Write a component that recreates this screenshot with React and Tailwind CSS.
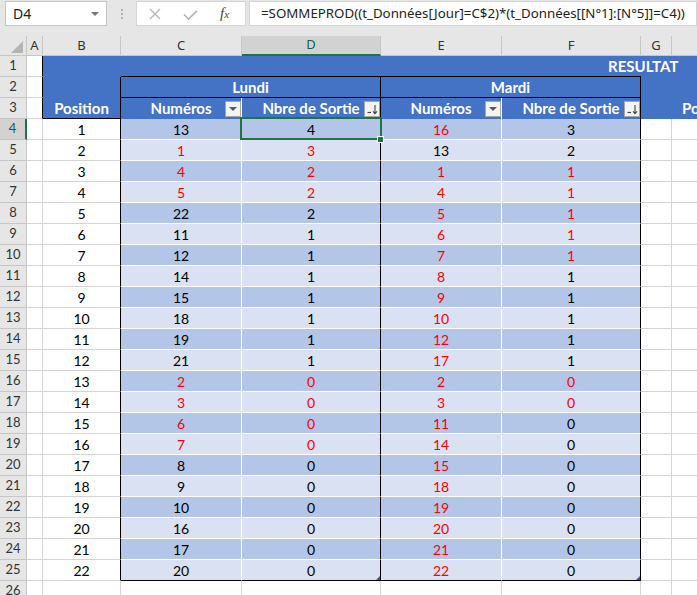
import React from "react";

const COLS = "grid grid-cols-[27px_16px_78px_121px_139px_121px_139px_31px_1fr]";

// C, D, E, F values; trailing "r" = red text
const DATA = [
  ["13", "4", "16r", "3"],
  ["1r", "3r", "13", "2"],
  ["4r", "2r", "1r", "1r"],
  ["5r", "2r", "4r", "1r"],
  ["22", "2", "5r", "1r"],
  ["11", "1", "6r", "1r"],
  ["12", "1", "7r", "1r"],
  ["14", "1", "8r", "1"],
  ["15", "1", "9r", "1"],
  ["18", "1", "10r", "1"],
  ["19", "1", "12r", "1"],
  ["21", "1", "17r", "1"],
  ["2r", "0r", "2r", "0r"],
  ["3r", "0r", "3r", "0r"],
  ["6r", "0r", "11r", "0"],
  ["7r", "0r", "14r", "0"],
  ["8", "0", "15r", "0"],
  ["9", "0", "18r", "0"],
  ["10", "0", "19r", "0"],
  ["16", "0", "20r", "0"],
  ["17", "0", "21r", "0"],
  ["20", "0", "22r", "0"],
];

function Num({ v }) {
  const red = v.endsWith("r");
  return (
    <span className={red ? "text-[#ff0000]" : "text-black"}>
      {v.replace("r", "")}
    </span>
  );
}

function FormulaBar() {
  return (
    <div className="h-[36px] flex items-start pt-px">
      <div className="ml-[5px] w-[102px] h-[25px] bg-white border border-[#c6c6c6] flex items-center justify-between pl-[7px] pr-[7px] text-[14px] text-[#222]">
        <span>D4</span>
        <span className="w-0 h-0 border-x-[4px] border-x-transparent border-t-[4px] border-t-[#777]" />
      </div>
      <div className="ml-[14px] mt-[8px] flex flex-col gap-[2px]">
        <span className="w-[2px] h-[2px] bg-[#b0b0b0]" />
        <span className="w-[2px] h-[2px] bg-[#b0b0b0]" />
        <span className="w-[2px] h-[2px] bg-[#b0b0b0]" />
      </div>
      <div className="ml-[13px] w-[110px] h-[25px] bg-white border border-[#d4d4d4] flex items-center pl-[12px]">
        <svg width="12" height="12" viewBox="0 0 12 12">
          <path d="M1 1L11 11M11 1L1 11" stroke="#b4b4b4" strokeWidth="1.3" fill="none" />
        </svg>
        <svg className="ml-[22px] mt-[3px]" width="15" height="10" viewBox="0 0 15 10">
          <path d="M1 4.5L5.5 9L14 0.8" stroke="#b4b4b4" strokeWidth="1.7" fill="none" />
        </svg>
        <span className="ml-[22px] font-['Liberation_Serif',serif] italic text-[15px] text-[#444] leading-none">
          f<span className="text-[11px]">x</span>
        </span>
      </div>
      <div className="ml-[3px] flex-1 h-[25px] bg-white border border-[#d4d4d4] pl-[11px] flex items-center whitespace-nowrap overflow-hidden text-[13.3px] text-[#222]">
        =SOMMEPROD((t_Données[Jour]=C$2)*(t_Données[[N°1]:[N°5]]=C4))
      </div>
    </div>
  );
}

function RowHdr({ n, sel }) {
  return (
    <div
      className={`h-[21px] border-b border-b-[#c6c6c6] flex items-center justify-center text-[13px] ${
        sel
          ? "bg-[#d2d2d2] border-r-2 border-r-[#217346] text-[#1e5b38]"
          : "bg-[#e6e6e6] border-r border-r-[#c6c6c6] text-[#333]"
      }`}
    >
      {n}
    </div>
  );
}

function FilterBtn({ sort }) {
  return (
    <div className="absolute right-0 top-[3px] w-[16px] h-[16px] bg-[#f4f4f4] border border-[#a6a6a6] flex items-center justify-center">
      {sort ? (
        <svg width="14" height="14" viewBox="0 0 14 14">
          <path d="M2.5 10.5h3.5" stroke="#444" strokeWidth="1.2" fill="none" />
          <path d="M10 3v8.5M8 9.3l2 2.3 2-2.3" stroke="#444" strokeWidth="1.1" fill="none" />
        </svg>
      ) : (
        <span className="w-0 h-0 border-x-[4px] border-x-transparent border-t-[4px] border-t-[#595959]" />
      )}
    </div>
  );
}

function Sheet() {
  const head = "h-[20px] bg-[#e6e6e6] border-r border-b border-r-[#c6c6c6] border-b-[#c6c6c6] flex items-center justify-center text-[13px] text-[#333]";
  const blank = "h-[21px] bg-white border-r border-b border-r-[#d4d4d4] border-b-[#d4d4d4]";
  const blue = "bg-[#4472c4] text-white font-bold text-[15px]";

  return (
    <div className={`${COLS} bg-white font-['Lato',sans-serif] text-[14px]`}>
      {/* column letters */}
      <div className={`${head} relative font-['Noto_Sans',sans-serif]`}>
        <span className="absolute right-[3px] bottom-[2px] w-0 h-0 border-l-[12px] border-l-transparent border-b-[12px] border-b-[#b4b4b4]" />
      </div>
      {["A", "B", "C"].map((c) => (
        <div key={c} className={`${head} font-['Noto_Sans',sans-serif]`}>{c}</div>
      ))}
      <div className="h-[20px] bg-[#d2d2d2] border-r border-r-[#c6c6c6] border-b-2 border-b-[#217346] flex items-center justify-center text-[13px] text-[#1e5b38] font-['Noto_Sans',sans-serif]">
        D
      </div>
      {["E", "F", "G"].map((c) => (
        <div key={c} className={`${head} font-['Noto_Sans',sans-serif]`}>{c}</div>
      ))}
      <div className="h-[20px] bg-[#e6e6e6] border-b border-b-[#c6c6c6]" />

      {/* row 1 */}
      <RowHdr n={1} />
      <div className="h-[21px] border-r border-b border-r-black border-b-[#d4d4d4]" />
      <div className={`col-span-7 h-[21px] ${blue} flex items-center pl-[565px]`}>RESULTAT</div>

      {/* row 2 */}
      <RowHdr n={2} />
      <div className="h-[21px] border-r border-b border-r-black border-b-[#d4d4d4]" />
      <div className={`h-[21px] ${blue} border-r border-r-black`} />
      <div className={`col-span-2 h-[21px] ${blue} border-r border-b border-r-black border-b-black shadow-[0_-1px_0_#000] flex items-center justify-center`}>
        Lundi
      </div>
      <div className={`col-span-2 h-[21px] ${blue} border-r border-b border-r-black border-b-black shadow-[0_-1px_0_#000] flex items-center justify-center`}>
        Mardi
      </div>
      <div className={`col-span-2 h-[21px] ${blue}`} />

      {/* row 3 */}
      <RowHdr n={3} />
      <div className="h-[21px] border-r border-b border-r-black border-b-[#d4d4d4]" />
      <div className={`h-[21px] ${blue} border-r border-b border-r-black border-b-black flex items-center justify-center`}>
        Position
      </div>
      <div className={`relative h-[21px] ${blue} border-r border-r-white flex items-center justify-center`}>
        Numéros
        <FilterBtn />
      </div>
      <div className={`relative h-[21px] ${blue} border-r border-r-black flex items-center justify-center`}>
        Nbre de Sortie
        <FilterBtn sort />
      </div>
      <div className={`relative h-[21px] ${blue} border-r border-r-white flex items-center justify-center`}>
        Numéros
        <FilterBtn />
      </div>
      <div className={`relative h-[21px] ${blue} border-r border-r-black flex items-center justify-center`}>
        Nbre de Sortie
        <FilterBtn sort />
      </div>
      <div className={`col-span-2 h-[21px] ${blue} flex items-center pl-[41px] whitespace-nowrap overflow-hidden`}>
        Position
      </div>

      {/* data rows */}
      {DATA.map((r, i) => {
        const n = i + 4;
        const last = n === 25;
        const band = n % 2 === 0 ? "bg-[#b4c6e7]" : "bg-[#d9e1f2]";
        const bottom = last ? "border-b-black" : "border-b-white";
        const cell = `h-[21px] border-r border-b ${bottom} ${band} flex items-center justify-center`;
        return (
          <React.Fragment key={n}>
            <RowHdr n={n} sel={n === 4} />
            <div className={blank} />
            <div className="h-[21px] border-r border-b border-r-black border-b-[#d4d4d4] flex items-center justify-center text-black">
              {n - 3}
            </div>
            <div className={`${cell} border-r-white`}>
              <Num v={r[0]} />
            </div>
            <div className={`relative ${cell} border-r-black`}>
              <Num v={r[1]} />
              {n === 4 && (
                <div className="absolute -left-[2px] -top-[2px] w-[142px] h-[23px] border-2 border-[#217346] z-10">
                  <div className="absolute left-[135px] top-[17px] w-[7px] h-[7px] bg-[#217346] border border-white" />
                </div>
              )}
              {last && (
                <span className="absolute right-0 bottom-0 w-0 h-0 border-l-[4px] border-l-transparent border-b-[4px] border-b-[#3f4fa8]" />
              )}
            </div>
            <div className={`${cell} border-r-white`}>
              <Num v={r[2]} />
            </div>
            <div className={`relative ${cell} border-r-black`}>
              <Num v={r[3]} />
              {last && (
                <span className="absolute right-0 bottom-0 w-0 h-0 border-l-[4px] border-l-transparent border-b-[4px] border-b-[#3f4fa8]" />
              )}
            </div>
            <div className={blank} />
            <div className="h-[21px] bg-white border-b border-b-[#d4d4d4]" />
          </React.Fragment>
        );
      })}

      {/* row 26 (partly visible) */}
      <RowHdr n={26} />
      {[0, 1, 2, 3, 4, 5, 6].map((k) => (
        <div key={k} className={blank} />
      ))}
      <div className="h-[21px] bg-white border-b border-b-[#d4d4d4]" />
    </div>
  );
}

export default function App() {
  return (
    <div className="w-[697px] h-[595px] overflow-hidden bg-[#e6e6e6] font-['Noto_Sans',sans-serif]">
      <FormulaBar />
      <Sheet />
    </div>
  );
}
